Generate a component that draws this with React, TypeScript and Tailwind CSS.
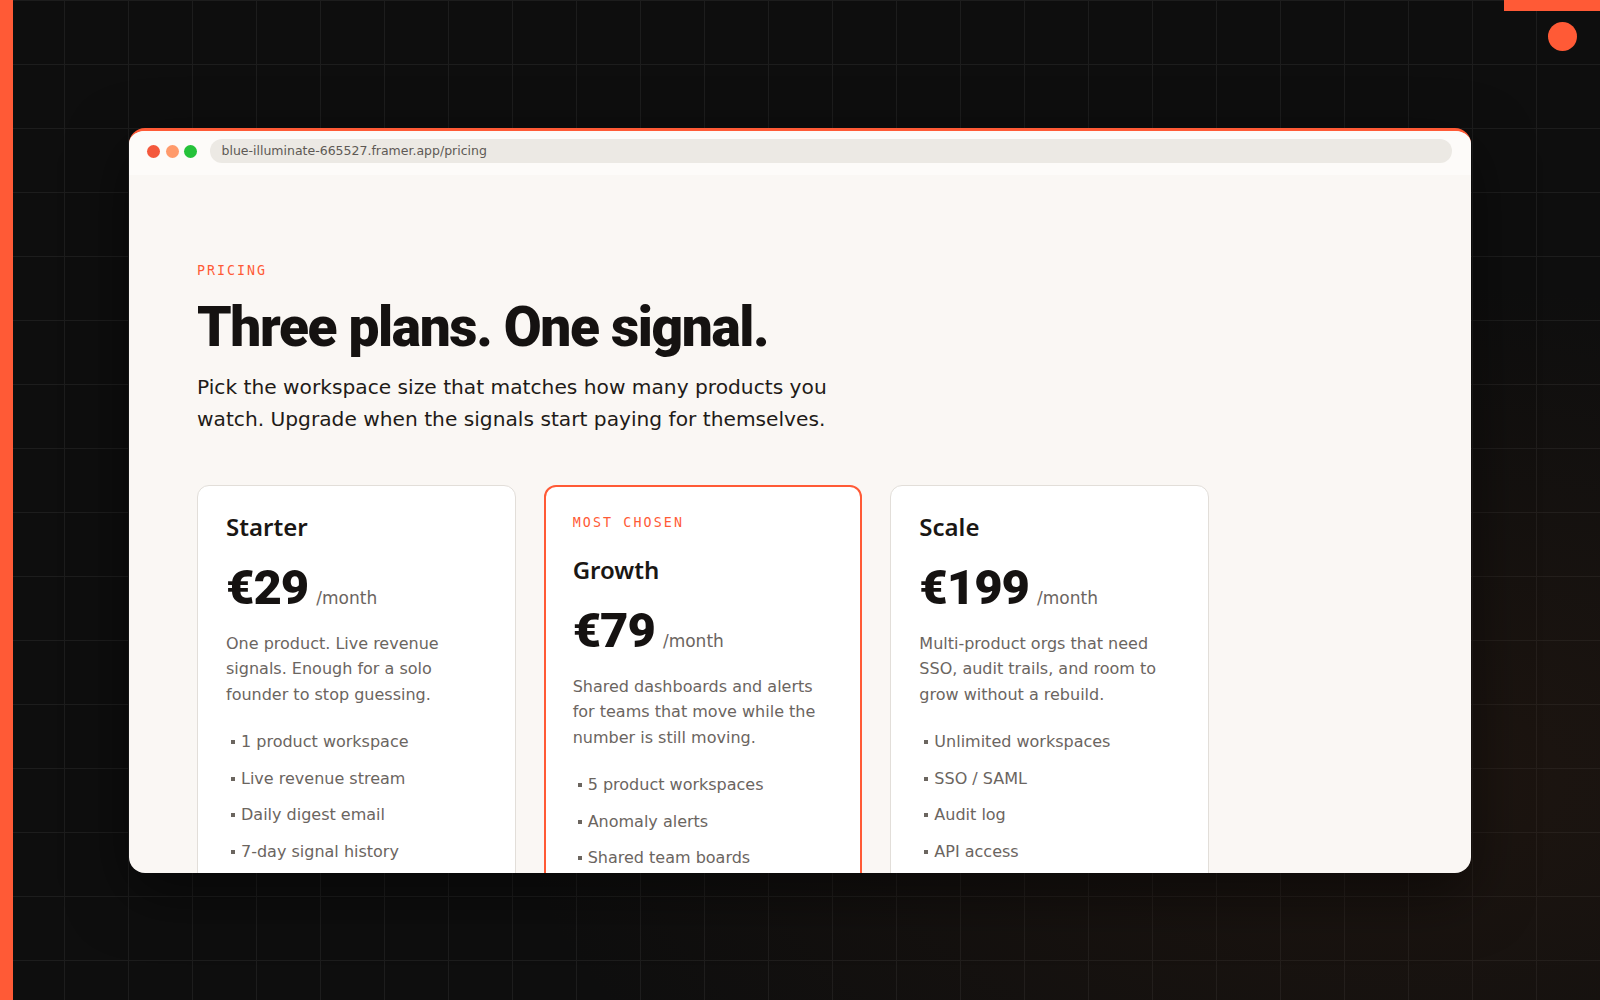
import React from 'react';

interface Plan {
  name: string;
  price: string;
  blurb: string;
  features: string[];
  featured?: boolean;
}

const plans: Plan[] = [
  {
    name: 'Starter',
    price: '€29',
    blurb: 'One product. Live revenue signals. Enough for a solo founder to stop guessing.',
    features: ['1 product workspace', 'Live revenue stream', 'Daily digest email', '7-day signal history'],
  },
  {
    name: 'Growth',
    price: '€79',
    blurb: 'Shared dashboards and alerts for teams that move while the number is still moving.',
    features: ['5 product workspaces', 'Anomaly alerts', 'Shared team boards'],
    featured: true,
  },
  {
    name: 'Scale',
    price: '€199',
    blurb: 'Multi-product orgs that need SSO, audit trails, and room to grow without a rebuild.',
    features: ['Unlimited workspaces', 'SSO / SAML', 'Audit log', 'API access'],
  },
];

function PlanCard({ plan }: { plan: Plan }) {
  return (
    <div
      className={
        plan.featured
          ? 'bg-white rounded-[12px] border-2 border-[#ff5a36] p-[27px]'
          : 'bg-white rounded-[12px] border border-[#e2ded9] p-[28px]'
      }
    >
      {plan.featured && (
        <div className="font-['DejaVu_Sans_Mono',monospace] text-[13.3px] leading-[18px] tracking-[0.16em] text-[#ff5a36] mb-[25px]">
          MOST CHOSEN
        </div>
      )}
      <h3 className="font-['Noto_Sans',sans-serif] text-[24px] leading-[26px] font-semibold text-[#1a1714]">
        {plan.name}
      </h3>
      <div className="mt-[20px] flex items-baseline gap-[8px]">
        <span className="font-['Roboto',sans-serif] font-black text-[49px] leading-[55px] tracking-[-0.02em] text-[#151211]">
          {plan.price}
        </span>
        <span className="text-[17px] text-[#6b655f]">/month</span>
      </div>
      <p className="mt-[16px] text-[16px] leading-[25.6px] text-[#6b655f]">{plan.blurb}</p>
      <ul className="mt-[23px] flex flex-col gap-[12.5px]">
        {plan.features.map((f) => (
          <li key={f} className="flex items-center text-[16px] leading-[24px] text-[#6b655f]">
            <span className="ml-[5px] mr-[6px] w-[4px] h-[4px] bg-[#6b655f]" />
            {f}
          </li>
        ))}
      </ul>
    </div>
  );
}

export default function App() {
  return (
    <div className="relative w-full h-screen overflow-hidden bg-[#0e0e0e] font-['DejaVu_Sans',sans-serif]">
      {/* grid + warm glow */}
      <div className="absolute inset-0 bg-[linear-gradient(to_right,#1d1d1d_1px,transparent_1px),linear-gradient(to_bottom,#1d1d1d_1px,transparent_1px)] bg-[size:64px_64px]" />
      <div className="absolute inset-0 bg-[radial-gradient(ellipse_at_88%_78%,rgba(70,40,22,0.28),transparent_45%)]" />

      {/* decorations */}
      <div className="absolute left-0 top-0 bottom-0 w-[13px] bg-[#ff5a36]" />
      <div className="absolute right-0 top-0 w-[96px] h-[11px] bg-[#ff5a36]" />
      <div className="absolute left-[1548px] top-[22px] w-[29px] h-[29px] rounded-full bg-[#ff5a36]" />

      <div className="relative h-full flex items-center justify-center">
        <div className="w-[1342px] h-[745px] rounded-[16px] overflow-hidden border-t-[3px] border-[#ff5a36] bg-[#faf7f4] shadow-[0_20px_60px_rgba(0,0,0,0.5)] flex flex-col">
          {/* browser chrome */}
          <div className="h-[44px] shrink-0 bg-[#fdfbf9] flex items-center pl-[18px] pr-[19px] pb-[3px]">
            <div className="flex items-center gap-[5.5px]">
              <span className="w-[13px] h-[13px] rounded-full bg-[#f4583c]" />
              <span className="w-[13px] h-[13px] rounded-full bg-[#ff9a6b]" />
              <span className="w-[13px] h-[13px] rounded-full bg-[#25c23a]" />
            </div>
            <div className="ml-[12.5px] flex-1 h-[24px] rounded-full bg-[#ece9e4] flex items-center px-[12px] text-[12.5px] text-[#5e5955]">
              blue-illuminate-665527.framer.app/pricing
            </div>
          </div>

          {/* page */}
          <div className="flex-1 px-[68px] pt-[87px]">
            <div className="font-['DejaVu_Sans_Mono',monospace] text-[13.3px] leading-[18px] tracking-[0.15em] text-[#ff5a36]">
              PRICING
            </div>
            <h1 className="mt-[20px] font-['Roboto',sans-serif] font-black text-[55px] leading-none tracking-[-0.025em] text-[#151211]">
              Three plans. One signal.
            </h1>
            <p className="mt-[16px] max-w-[660px] text-[20.2px] leading-[32px] text-[#1f1b18]">
              Pick the workspace size that matches how many products you watch. Upgrade when the signals start paying
              for themselves.
            </p>

            <div className="mt-[50px] w-[1012px] grid grid-cols-3 gap-[28px] items-start">
              {plans.map((p) => (
                <PlanCard key={p.name} plan={p} />
              ))}
            </div>
          </div>
        </div>
      </div>
    </div>
  );
}
